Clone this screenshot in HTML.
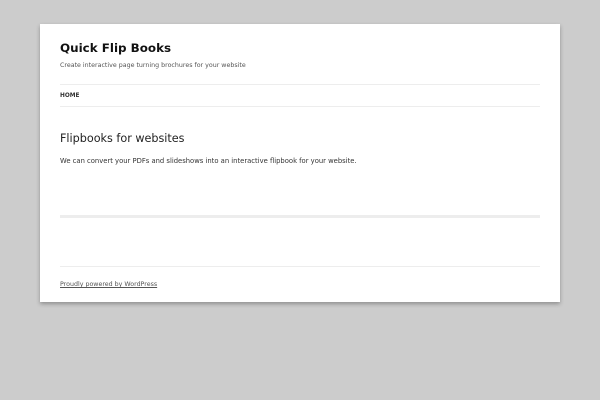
<!DOCTYPE html>
<html><head><style>
body{margin:0;background:#ccc;width:600px;height:400px;font-family:"DejaVu Sans","Liberation Sans",sans-serif;position:relative;overflow:hidden}
.box{position:absolute;left:40px;top:24px;width:520px;height:278px;background:#fff;box-shadow:0 2px 4px rgba(0,0,0,.3)}
.a{position:absolute;left:20px;white-space:nowrap;color:#444}
.l{position:absolute;left:20px;width:480px;height:1px;background:#ededed}
</style></head><body>
<div class="box">
<div class="a" style="top:17px;font-size:11.9px;font-weight:bold;color:#111">Quick Flip Books</div>
<div class="a" style="top:38px;font-size:6.3px;color:#555">Create interactive page turning brochures for your website</div>
<div class="l" style="top:60px"></div>
<div class="a" style="top:69px;font-size:5.8px;font-weight:bold;color:#333">HOME</div>
<div class="l" style="top:82px"></div>
<div class="a" style="top:108px;font-size:11.2px;color:#222">Flipbooks for websites</div>
<div class="a" style="top:133px;font-size:6.8px;color:#333">We can convert your PDFs and slideshows into an interactive flipbook for your website.</div>
<div class="l" style="top:191px;height:3px"></div>
<div class="l" style="top:242px"></div>
<div class="a" style="top:257px;font-size:6.3px;color:#555;text-decoration:underline">Proudly powered by WordPress</div>
</div>
</body></html>
